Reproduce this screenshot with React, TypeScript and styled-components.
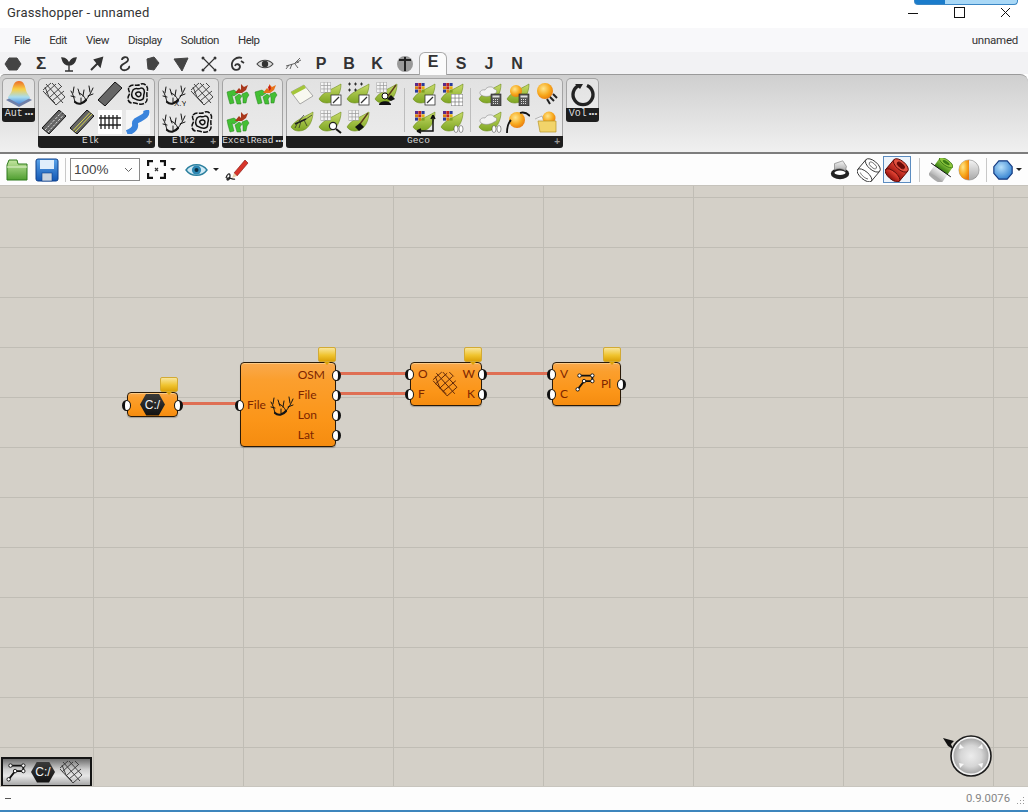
import React from 'react';
import styled, { createGlobalStyle } from 'styled-components';

const GlobalStyle = createGlobalStyle`
  html, body { margin: 0; padding: 0; background: #fff; }
  * { box-sizing: border-box; }
`;

const Window = styled.div`
  position: relative;
  width: 1028px;
  height: 812px;
  overflow: hidden;
  display: flex;
  flex-direction: column;
  font-family: Roboto, "Liberation Sans", sans-serif;
  color: #222;
`;

const TitleBar = styled.div`
  height: 28px;
  flex: none;
  display: flex;
  align-items: center;
  justify-content: space-between;
  padding-left: 7px;
  background: #fff;
`;

const Title = styled.div`
  font-size: 13px;
  letter-spacing: 0.2px;
  color: #333;
  margin-top: -3px;
`;

const Progress = styled.div`
  position: absolute;
  top: 0;
  left: 914px;
  width: 104px;
  height: 5px;
  border-radius: 0 0 4px 4px;
  border: 1px solid #3a86c4;
  border-top: none;
  background: linear-gradient(to right, #1b7ccb 29%, #a9d8f6 29%);
`;

const WinButtons = styled.div`
  display: flex;
  margin-top: -3px;
`;

const WinButton = styled.div`
  width: 46px;
  height: 20px;
  display: flex;
  align-items: center;
  justify-content: center;
  svg { display: block; }
`;

const MenuBar = styled.div`
  height: 24px;
  flex: none;
  display: flex;
  align-items: center;
  gap: 19.2px;
  padding: 0 10px 0 14px;
  background: #f8f8fa;
  font-size: 11.5px;
  letter-spacing: -0.5px;
`;

const MenuItem = styled.span`
  color: #333;
`;

const MenuRight = styled.span`
  margin-left: auto;
  color: #333;
  letter-spacing: -0.25px;
`;

const TabRow = styled.div`
  height: 22px;
  flex: none;
  display: flex;
  padding-left: 0;
  margin-left: -1px;
  background: #f2f2f4;
`;

const Tab = styled.div<{ $active?: boolean }>`
  width: 28px;
  height: ${p => (p.$active ? '23px' : '22px')};
  display: flex;
  align-items: center;
  justify-content: center;
  font: bold 16px "Liberation Sans", sans-serif;
  color: #333;
  position: relative;
  z-index: 1;
  margin-top: ${p => (p.$active ? '0' : '1px')};
  ${p =>
    p.$active &&
    `
    background: #fbfbfb;
    border: 1px solid #aaa;
    border-bottom: none;
    border-radius: 6px 6px 0 0;
    padding-bottom: 5px;
  `}
`;

const SigmaGlyph = styled.span`
  font-size: 17px;
`;

const Ribbon = styled.div`
  height: 80px;
  flex: none;
  display: flex;
  align-items: flex-start;
  gap: 3px;
  padding: 3px 0 0 2px;
  background: linear-gradient(to bottom, #cfcfcf, #dedede 45%, #f0f0f0);
  border-top: 1px solid #9a9a9a;
  border-bottom: 2px solid #7d7d7d;
  border-radius: 5px 8px 0 0;
`;

const Section = styled.div<{ $w: number; $h: number }>`
  position: relative;
  width: ${p => p.$w}px;
  height: ${p => p.$h}px;
  display: flex;
  flex-direction: column;
  border: 1px solid #a4a4a4;
  border-bottom: none;
  border-radius: 5px 5px 3px 3px;
  background: linear-gradient(to bottom, #e2e2e2, #ececec);
`;

const SectionBody = styled.div`
  flex: 1;
  display: flex;
  padding-left: 1px;
`;

const SingleBody = styled.div`
  flex: 1;
  display: flex;
  align-items: center;
  justify-content: center;
`;

const IconGrid = styled.div<{ $cols: number }>`
  display: grid;
  grid-template-columns: repeat(${p => p.$cols}, 28px);
  grid-auto-rows: 28px;
  padding-top: 1px;
`;

const IconCell = styled.div`
  display: flex;
  align-items: center;
  justify-content: center;
  svg { display: block; }
`;

const GroupSep = styled.div`
  width: 1px;
  height: 44px;
  margin: 9px 5px 0 4px;
  background: #bdbdbd;
`;

const SectionFooter = styled.div<{ $h: number; $pad?: number }>`
  position: relative;
  height: ${p => p.$h}px;
  flex: none;
  margin: 0 -1px;
  padding-right: ${p => p.$pad ?? 0}px;
  background: #1e1e1e;
  border-radius: 0 0 3px 3px;
  color: #ddd;
  font: ${p => (p.$h > 13 ? '10px' : '9.5px')} / ${p => p.$h - 2}px "Liberation Mono", monospace;
  text-align: center;
  white-space: nowrap;
`;

const FooterDots = styled.span`
  font-size: 8px;
  letter-spacing: -2px;
  margin-left: 1px;
`;

const FooterPlus = styled.span`
  position: absolute;
  right: 3px;
  top: 0;
  color: #999;
  font: bold 10px/12px "Liberation Sans", sans-serif;
`;

const Toolbar = styled.div`
  height: 31px;
  flex: none;
  display: flex;
  align-items: center;
  padding-left: 5px;
  background: #fdfdfd;
`;

const Tool = styled.div<{ $w: number; $ml?: number; $active?: boolean }>`
  width: ${p => p.$w}px;
  height: 27px;
  flex: none;
  margin-left: ${p => p.$ml ?? 0}px;
  display: flex;
  align-items: center;
  justify-content: center;
  ${p => p.$active && 'border: 1px solid #5b8cc0; background: #eef4fb;'}
  svg { display: block; }
`;

const ToolSep = styled.div<{ $ml: number }>`
  width: 1px;
  height: 24px;
  flex: none;
  margin-left: ${p => p.$ml}px;
  background: #c8c8c8;
`;

const Combo = styled.div`
  width: 70px;
  height: 23px;
  flex: none;
  margin-left: 4px;
  display: flex;
  align-items: center;
  justify-content: space-between;
  padding: 0 6px 0 3px;
  border: 1px solid #8a8a8a;
  background: #fff;
  font: 13.5px "Liberation Sans", sans-serif;
  color: #444;
`;

const Caret = styled.div<{ $ml: number }>`
  width: 0;
  height: 0;
  flex: none;
  margin-left: ${p => p.$ml}px;
  border-left: 3px solid transparent;
  border-right: 3px solid transparent;
  border-top: 3px solid #222;
`;

const RightTools = styled.div`
  margin-left: auto;
  display: flex;
  align-items: center;
  padding-right: 6px;
`;

const Canvas = styled.div`
  position: relative;
  flex: 1;
  background-color: #d4d0c8;
  background-image:
    linear-gradient(to right, #c0bdb5 1px, transparent 1px),
    linear-gradient(to bottom, #c0bdb5 1px, transparent 1px);
  background-size: 150px 100%, 100% 50px;
  background-position: 93px 0, 0 11px;
  border-top: 1px solid #c6c3bc;
`;

const Wire = styled.div<{ $x: number; $y: number; $w: number }>`
  position: absolute;
  left: ${p => p.$x}px;
  top: ${p => p.$y - 187}px;
  width: ${p => p.$w}px;
  height: 3px;
  background: #df6f54;
`;

const Node = styled.div<{ $x: number; $y: number; $w: number; $h: number }>`
  position: absolute;
  left: ${p => p.$x}px;
  top: ${p => p.$y - 186}px;
  width: ${p => p.$w}px;
  height: ${p => p.$h}px;
  display: flex;
  align-items: center;
  justify-content: space-between;
  border: 1px solid #2a1a08;
  border-radius: 4px;
  background: linear-gradient(to bottom, #f9a94e, #fb9f2e 20%, #fb9518 70%, #f58c10);
  box-shadow: inset 0 1px 0 rgba(255, 225, 170, 0.6), 0 1px 1px rgba(0, 0, 0, 0.25);
  color: #7d2500;
  font: 12px Lato, "Liberation Sans", sans-serif;
`;

const PortColumn = styled.div<{ $align: 'left' | 'right' }>`
  display: flex;
  flex-direction: column;
  text-align: ${p => p.$align};
`;

const PortRow = styled.div<{ $side: 'in' | 'out'; $pad: number; $minW?: number }>`
  position: relative;
  height: 20px;
  line-height: 20px;
  min-width: ${p => p.$minW ?? 0}px;
  ${p => (p.$side === 'in' ? `padding-left: ${p.$pad}px;` : `padding-right: ${p.$pad}px;`)}
`;

const Port = styled.span<{ $side: 'in' | 'out' }>`
  position: absolute;
  top: 5px;
  ${p => (p.$side === 'in' ? 'left' : 'right')}: -6px;
  width: 9px;
  height: 11px;
  border-radius: 50%;
  background: #fff;
  border: 1.5px solid #111;
  ${p => (p.$side === 'in' ? 'border-left-width: 3px;' : 'border-right-width: 3px;')}
`;

const NodeIcon = styled.div<{ $mt?: number }>`
  flex: none;
  display: flex;
  margin-top: ${p => p.$mt ?? 0}px;
`;

const Balloon = styled.div`
  position: absolute;
  right: -1px;
  top: -16px;
  width: 18px;
  height: 15px;
  border: 1px solid #d2aa35;
  border-radius: 2px;
  background: linear-gradient(to bottom, #f8e59b, #f0c430 55%, #dca208);
  &::after {
    content: '';
    position: absolute;
    left: 5px;
    bottom: -4px;
    border-left: 3px solid transparent;
    border-right: 3px solid transparent;
    border-top: 3px solid #dca208;
  }
`;

const Hexagon = styled.div<{ $size: number }>`
  flex: none;
  width: ${p => p.$size}px;
  height: ${p => Math.round(p.$size * 0.86)}px;
  display: flex;
  align-items: center;
  justify-content: center;
  clip-path: polygon(25% 0, 75% 0, 100% 50%, 75% 100%, 25% 100%, 0 50%);
  background: linear-gradient(to bottom, #3a3a3a, #111);
  color: #f4f4f4;
  font: 12px "Liberation Sans", sans-serif;
`;

const ParamInner = styled.div`
  flex: 1;
  display: flex;
  justify-content: center;
`;

const RecentPanel = styled.div`
  position: absolute;
  left: 1px;
  bottom: 0;
  width: 91px;
  height: 29px;
  display: flex;
  align-items: center;
  gap: 4px;
  padding-left: 2px;
  border: 2px solid #141414;
  border-bottom-width: 1px;
  background: linear-gradient(to bottom, #6e6e6e, #cfcfcf 40%, #e6e6e6 65%, #a8a8a8);
`;

const Compass = styled.div`
  position: absolute;
  left: 950px;
  top: 549px;
  display: flex;
`;

const CompassArrow = styled.div`
  position: absolute;
  left: 943px;
  top: 552px;
  display: flex;
`;

const StatusBar = styled.div`
  height: 26px;
  flex: none;
  display: flex;
  align-items: center;
  justify-content: space-between;
  padding: 0 3px 0 5px;
  background: #fdfdfd;
  border-bottom: 2px solid #3d86bd;
  border-top: 1px solid #c8c5be;
`;

const Dash = styled.span`
  width: 6px;
  height: 1px;
  background: #555;
`;

const StatusRight = styled.div`
  display: flex;
  align-items: flex-end;
  gap: 6px;
`;

const Version = styled.span`
  font: 11.3px Roboto, "Liberation Sans", sans-serif;
  color: #858585;
`;

const Defs = styled.svg`
  position: absolute;
  width: 0;
  height: 0;
`;

const SharedDefs = () => (
  <Defs>
    <defs>
      <linearGradient id="leaf" x1="0" y1="0" x2="0" y2="1">
        <stop offset="0" stopColor="#c9dc6a" />
        <stop offset="1" stopColor="#7da522" />
      </linearGradient>
      <radialGradient id="sun" cx="0.4" cy="0.35" r="0.7">
        <stop offset="0" stopColor="#ffe58a" />
        <stop offset="0.6" stopColor="#f7a81c" />
        <stop offset="1" stopColor="#e8780c" />
      </radialGradient>
      <linearGradient id="hill" x1="0" y1="0" x2="0" y2="1">
        <stop offset="0" stopColor="#ea6a28" />
        <stop offset="0.35" stopColor="#f8cf45" />
        <stop offset="0.7" stopColor="#a8dcf0" />
        <stop offset="1" stopColor="#4a88d8" />
      </linearGradient>
      <linearGradient id="red" x1="0" y1="0" x2="0" y2="1">
        <stop offset="0" stopColor="#ee4a3a" />
        <stop offset="1" stopColor="#8c0c08" />
      </linearGradient>
      <linearGradient id="green" x1="0" y1="0" x2="0" y2="1">
        <stop offset="0" stopColor="#9ad248" />
        <stop offset="1" stopColor="#367c10" />
      </linearGradient>
      <linearGradient id="metal" x1="0" y1="0" x2="0" y2="1">
        <stop offset="0" stopColor="#f4f4f4" />
        <stop offset="1" stopColor="#a8a8a8" />
      </linearGradient>
      <radialGradient id="blue" cx="0.4" cy="0.35" r="0.7">
        <stop offset="0" stopColor="#b7e0fa" />
        <stop offset="1" stopColor="#2f7fd0" />
      </radialGradient>
      <radialGradient id="dial" cx="0.5" cy="0.5" r="0.5">
        <stop offset="0" stopColor="#ececec" />
        <stop offset="0.6" stopColor="#d6d6d6" />
        <stop offset="1" stopColor="#a9a9a9" />
      </radialGradient>
      <linearGradient id="folder" x1="0" y1="0" x2="0" y2="1">
        <stop offset="0" stopColor="#c4e6a0" />
        <stop offset="1" stopColor="#4f9e30" />
      </linearGradient>
      <linearGradient id="floppy" x1="0" y1="0" x2="0" y2="1">
        <stop offset="0" stopColor="#5aa4ea" />
        <stop offset="1" stopColor="#1257b4" />
      </linearGradient>
    </defs>
  </Defs>
);

const Svg: React.FC<{ size?: number; children: React.ReactNode }> = ({ size = 24, children }) => (
  <svg width={size} height={size} viewBox="0 0 24 24">
    {children}
  </svg>
);

// street map: two crossing families of lines plus a couple of off-axis roads
const MapLines = ({ color = '#333' }: { color?: string }) => (
  <g fill="none" stroke={color} strokeWidth="0.9">
    <path d="M1 8L9 1M3 12L14 2M7 16L19 5M10 19L22 9M14 23L23 15" />
    <path d="M4 2L21 21M10 1L23 15M1 9L14 23M16 1L20 5" />
    <path d="M3 5L7 15L13 21" />
  </g>
);

const AntlerLines = () => (
  <g fill="none" stroke="#151515" strokeLinecap="round">
    <path strokeWidth="2.2" d="M5 20C8 23 13 22 16 18" />
    <path strokeWidth="1" d="M16 18C19 14 21 11 23 6M16 18C14 14 12 12 9 11M5 20C4 16 3 12 1 9M18 14L23 12M20 10L19 4M5 15L1 14M10 13L8 7M13 14L14 8M3 11L4 5M11 20L11 16" />
  </g>
);

const ContourLines = () => (
  <g fill="none" stroke="#111" strokeWidth="1.5">
    <path d="M3 5C7 1 11 5 15 2C20 1 23 6 21 10C20 14 23 18 19 21C14 24 10 20 6 21C2 21 1 16 3 13C5 10 1 8 3 5Z" strokeDasharray="5 1.3" />
    <path d="M7 8C10 5 12 8 15 6C18 6 19 9 18 12C17 15 19 17 15 18C12 19 9 17 7 16C5 14 6 10 7 8Z" />
    <path d="M10 11C12 9 15 10 15 12C15 15 12 15 11 14C10 13 9 12 10 11Z" />
  </g>
);

const RoadBand = ({ mark }: { mark?: 'white' | 'yellow' }) => (
  <>
    <polygon points="0,18 17,0 24,6 7,24" fill="#666" stroke="#111" strokeWidth="1" />
    {mark === 'white' && <path d="M3 20L19.5 2.5M6 22L22 4.5" stroke="#eee" strokeWidth="0.9" strokeDasharray="2.4 1.4" />}
    {mark === 'yellow' && <path d="M3 20.5L20 2.5M5 22L22 4" stroke="#e6e44a" strokeWidth="0.9" />}
  </>
);

const Rail = () => (
  <>
    <rect width="24" height="24" fill="#fff" />
    <path d="M1 8H23M1 15H23" stroke="#222" strokeWidth="1.5" />
    <path d="M3 5V19M7 5V19M11 5V19M15 5V19M19 5V19" stroke="#222" strokeWidth="1.3" />
  </>
);

const River = () => (
  <>
    <rect width="24" height="24" fill="#f6f6f6" />
    <path d="M20 0C23 9 8 8 9 14C10 18 6 21 1 23" fill="none" stroke="#3a84dc" strokeWidth="6" />
  </>
);

const ExcelIcon = ({ flame }: { flame?: boolean }) => (
  <Svg>
    <g fill="#43bf33" stroke="#23801a" strokeWidth="0.5">
      <polygon points="1,10 8,8 12,11 8,14 6,13 8,21 4,22 2,15" />
      <polygon points="9,15 13,12 16,14 14,17 15,22 11,22" />
      <polygon points="16,12 21,10 23,13 21,16 20,21 17,21 17,16" />
    </g>
    <path d="M9 11L13 6L15 8L15 2L18 5L22 3L20 8L16 11Z" fill={flame ? '#e8721a' : '#a9381c'} />
    {flame && <path d="M14 5L16 3L17 7L15 9Z" fill="#c81e12" />}
  </Svg>
);

const Leaf = () => (
  <path d="M1 17C5 10 13 8 23 2C23 10 19 21 9 21C6 21 3 20 1 17Z" fill="url(#leaf)" stroke="#6d8c1c" strokeWidth="0.6" />
);

const GridMark = ({ x, y, s, color }: { x: number; y: number; s: number; color: string }) => (
  <g fill={color}>
    {[0, 1, 2].flatMap(r =>
      [0, 1, 2].map(c => <rect key={`${r}-${c}`} x={x + c * s} y={y + r * s} width={s - 0.7} height={s - 0.7} />)
    )}
  </g>
);

const HeatMark = () => {
  const colors = ['#5a2a8c', '#c02020', '#2a3a9c', '#d88010', '#c02020', '#e8b010', '#2a3a9c', '#d88010', '#7fa020'];
  return (
    <g>
      {colors.map((c, i) => (
        <rect key={i} x={3 + (i % 3) * 3.3} y={1 + Math.floor(i / 3) * 3.3} width="3" height="3" fill={c} />
      ))}
    </g>
  );
};

type LeafTop = 'grid' | 'heat' | 'dots' | 'cloud' | 'sun' | 'gnat';
type LeafBadge = 'pencil' | 'lens' | 'brush' | 'person' | 'grid' | 'axes' | 'feet' | 'calc';

const Badge = ({ kind }: { kind?: LeafBadge }) => {
  switch (kind) {
    case 'pencil':
      return (
        <g>
          <rect x="13" y="13" width="10" height="10" fill="#fff" stroke="#333" strokeWidth="0.8" />
          <path d="M15 21L21 15" stroke="#333" strokeWidth="1.3" />
        </g>
      );
    case 'lens':
      return (
        <g>
          <circle cx="15" cy="16" r="3.6" fill="#fff" stroke="#222" strokeWidth="1.2" />
          <path d="M18 19L23 23" stroke="#111" strokeWidth="2" />
        </g>
      );
    case 'brush':
      return (
        <g>
          <path d="M14 14L22 3" stroke="#5a3a1a" strokeWidth="1.4" />
          <path d="M9 17L14 13L18 17L13 21Z" fill="#111" />
        </g>
      );
    case 'person':
      return (
        <g>
          <circle cx="11" cy="14" r="3" fill="#fff" stroke="#111" />
          <path d="M5 23C5 18 17 18 17 23Z" fill="#111" />
          <path d="M14 14L22 3" stroke="#5a3a1a" strokeWidth="1.4" />
          <path d="M13 17L17 13L21 17L17 19Z" fill="#111" />
        </g>
      );
    case 'grid':
      return (
        <g>
          <rect x="11" y="12" width="12" height="12" fill="#777" />
          <GridMark x={11.5} y={12.5} s={3.9} color="#fff" />
        </g>
      );
    case 'axes':
      return <path d="M5 21H21V5M21 5L19 9M21 5L23 9M5 21L9 19M5 21L9 23" fill="none" stroke="#111" strokeWidth="1.5" />;
    case 'feet':
      return (
        <g fill="#fff" stroke="#333" strokeWidth="0.5">
          <ellipse cx="16" cy="19" rx="2" ry="3.5" />
          <ellipse cx="21" cy="19" rx="2" ry="3.5" />
        </g>
      );
    case 'calc':
      return (
        <g>
          <rect x="13" y="12" width="10" height="12" fill="#555" stroke="#222" strokeWidth="0.6" />
          <rect x="14.5" y="13.5" width="7" height="2" fill="#ddd" />
          <path d="M15 17.5H21M15 19.5H21M15 21.5H21" stroke="#ddd" strokeWidth="1" strokeDasharray="1 1" />
        </g>
      );
    default:
      return null;
  }
};

const LeafIcon = ({ top, badge }: { top?: LeafTop; badge?: LeafBadge }) => (
  <Svg>
    <Leaf />
    {top === 'grid' && (
      <g>
        <rect x="2.6" y="0.2" width="10.4" height="10.4" fill="#9a9a9a" />
        <GridMark x={3} y={0.5} s={3.4} color="#f4f4f4" />
      </g>
    )}
    {top === 'heat' && <HeatMark />}
    {top === 'dots' && (
      <path d="M2 2H5M3.5 .5V3.5M8 2H11M9.5 .5V3.5M14 2H17M15.5 .5V3.5M2 8H5M3.5 6.5V9.5M8 8H11M9.5 6.5V9.5" stroke="#222" strokeWidth="0.9" />
    )}
    {top === 'cloud' && (
      <path d="M3 13C0 10 4 7 7 8C9 4 15 4 16 7C19 7 20 11 16 12C12 15 6 15 3 13Z" fill="#f2f2f2" stroke="#8a8a8a" strokeWidth="0.6" />
    )}
    {top === 'sun' && <circle cx="10" cy="9" r="6" fill="url(#sun)" />}
    {top === 'gnat' && (
      <g stroke="#222" fill="none">
        <path d="M5 14L16 9" strokeWidth="1.8" />
        <path d="M8 12L5 18M11 11L9 18M14 10L17 16M16 9L22 5M9 11L14 5" strokeWidth="0.7" />
      </g>
    )}
    <Badge kind={badge} />
  </Svg>
);

const NoteIcon = () => (
  <Svg>
    <polygon points="1,10 14,3 23,14 10,22" fill="#f8f8f0" stroke="#888" strokeWidth="0.7" />
    <polygon points="1,10 14,3 16,6 3,13" fill="#a4c639" />
  </Svg>
);

const SunIcon = ({ variant }: { variant: 'rays' | 'arc' }) => (
  <Svg>
    <circle cx="11" cy={variant === 'rays' ? 9 : 10} r="8" fill="url(#sun)" />
    {variant === 'rays' ? (
      <path d="M16 15L20 19M19 12L23 16M13 17L16 22" stroke="#222" strokeWidth="2" />
    ) : (
      <path d="M5 10C2 13 1 18 1 23M14 3C17 2 21 3 24 6" fill="none" stroke="#111" strokeWidth="1.8" />
    )}
  </Svg>
);

const SunFolderIcon = () => (
  <Svg>
    <circle cx="15" cy="8" r="6.5" fill="url(#sun)" />
    <path d="M1 9L8 6L9 9" fill="#f4f4f4" stroke="#999" strokeWidth="0.7" />
    <polygon points="4,11 22,11 22,22 6,22" fill="#f2d46a" stroke="#b8962a" strokeWidth="0.7" />
  </Svg>
);

const TabIcon: React.FC<{ d?: string; fill?: string; stroke?: string; w?: number; children?: React.ReactNode }> = ({
  d,
  fill = 'none',
  stroke = '#333',
  w = 2,
  children,
}) => (
  <svg width="18" height="18" viewBox="0 0 18 18">
    {d && <path d={d} fill={fill} stroke={stroke} strokeWidth={w} />}
    {children}
  </svg>
);

const tabs: React.ReactNode[] = [
  <TabIcon key="a" d="M5 3H13L17 9L13 15H5L1 9Z" fill="#444" stroke="#444" w={1} />,
  <SigmaGlyph key="b">Σ</SigmaGlyph>,
  <TabIcon key="c" d="M9 10V16M5 16H13M9 10C5 10 3 7 2 3C6 3 8 5 9 10C10 5 12 3 16 3C15 7 13 10 9 10Z" fill="#333" w={1.4} />,
  <TabIcon key="d" d="M3 15L10 8M7 5L14 3L12 11Z" fill="#333" w={2} />,
  <TabIcon key="e" d="M6 5C6 2 11 1 12 4C13 7 8 8 6 10C3 13 6 16 10 15C12 14 14 13 13 11" w={1.8} />,
  <TabIcon key="f" d="M3 4L10 2L15 8L10 15L4 14Z" fill="#444" stroke="#444" w={1} />,
  <TabIcon key="g" d="M2 4L16 3L10 16Z" fill="#444" stroke="#444" w={1} />,
  <TabIcon key="h" w={1.5}>
    <path d="M4 14L14 4M4 4L14 14" stroke="#333" strokeWidth="1.1" />
    <circle cx="3" cy="15" r="1.5" fill="#333" />
    <circle cx="15" cy="3" r="1.5" fill="#333" />
    <circle cx="3" cy="3" r="1.5" fill="#333" />
    <circle cx="15" cy="15" r="1.5" fill="#333" />
  </TabIcon>,
  <TabIcon key="i" d="M14 3C8 1 3 6 4 11C5 16 11 16 12 12C12 9 8 8 7 11M13 6L16 8" w={1.8} />,
  <TabIcon key="j" w={1}>
    <path d="M1 9C5 4 13 4 17 9C13 14 5 14 1 9Z" fill="#ddd" stroke="#444" strokeWidth="1.2" />
    <circle cx="9" cy="9" r="3.2" fill="#333" />
  </TabIcon>,
  <TabIcon key="k" w={1}>
    <path d="M2 11L9 9L15 7M5 10L2 14M8 9L6 14M11 9L14 13M11 8L16 3M13 7L17 5" stroke="#555" strokeWidth="0.9" fill="none" />
  </TabIcon>,
  'P',
  'B',
  'K',
  <TabIcon key="t" w={1}>
    <circle cx="9" cy="9" r="8" fill="#999" />
    <path d="M3 5H15M9 2V16" stroke="#222" strokeWidth="2" />
  </TabIcon>,
  'E',
  'S',
  'J',
  'N',
];

const PolylineIcon = () => (
  <Svg size={22}>
    <path d="M4 20L11 11H20V5H6" fill="none" stroke="#111" strokeWidth="2" />
    {[[4, 20], [11, 11], [20, 11], [20, 5], [6, 5]].map(([x, y]) => (
      <circle key={`${x}-${y}`} cx={x} cy={y} r="1.9" fill="#fff" stroke="#111" strokeWidth="1" />
    ))}
  </Svg>
);

const CylinderPreview = ({ fill, wire }: { fill: string; wire?: boolean }) => {
  const edge = wire ? '#333' : '#5a0a08';
  return (
    <Svg>
      <g transform="rotate(40 12 12)">
        <rect x="3" y="6" width="18" height="13" fill={fill} stroke={edge} strokeWidth="0.9" />
        <ellipse cx="12" cy="19" rx="9" ry="4" fill={fill} stroke={edge} strokeWidth="0.9" />
        <ellipse cx="12" cy="6" rx="9" ry="4.4" fill={wire ? '#fff' : '#e2503f'} stroke={edge} strokeWidth="0.9" />
        <ellipse cx="12" cy="6" rx="4.5" ry="2.1" fill={wire ? '#fff' : '#6b0806'} stroke={wire ? '#555' : edge} strokeWidth="0.8" />
        {wire && <path d="M7 19.5C9 21 15 21 17 19.5" fill="none" stroke="#555" strokeWidth="0.8" />}
      </g>
    </Svg>
  );
};

const Dots = () => <FooterDots>•••</FooterDots>;

const App: React.FC = () => (
  <Window>
    <GlobalStyle />
    <SharedDefs />
    <TitleBar>
      <Title>Grasshopper - unnamed</Title>
      <WinButtons>
        <WinButton>
          <svg width="10" height="10" viewBox="0 0 10 10">
            <path d="M0 5.5H10" stroke="#111" />
          </svg>
        </WinButton>
        <WinButton>
          <svg width="11" height="11" viewBox="0 0 11 11">
            <rect x="0.5" y="0.5" width="10" height="10" fill="none" stroke="#111" />
          </svg>
        </WinButton>
        <WinButton>
          <svg width="11" height="11" viewBox="0 0 11 11">
            <path d="M1 1L10 10M10 1L1 10" stroke="#111" />
          </svg>
        </WinButton>
      </WinButtons>
    </TitleBar>
    <Progress />
    <MenuBar>
      {['File', 'Edit', 'View', 'Display', 'Solution', 'Help'].map(item => (
        <MenuItem key={item}>{item}</MenuItem>
      ))}
      <MenuRight>unnamed</MenuRight>
    </MenuBar>
    <TabRow>
      {tabs.map((t, i) => (
        <Tab key={i} $active={t === 'E'}>
          {t}
        </Tab>
      ))}
    </TabRow>
    <Ribbon>
      <Section $w={33} $h={44}>
        <SingleBody>
          <svg width="28" height="28" viewBox="0 0 28 28">
            <path d="M1 20L14 27L27 20L14 13Z" fill="#6f7fa8" />
            <path d="M14 1C19 1 20 6 21 10C22 14 25 16 25 18L14 24L3 18C3 16 6 14 7 10C8 6 9 1 14 1Z" fill="url(#hill)" />
          </svg>
        </SingleBody>
        <SectionFooter $h={14}>Aut<Dots /></SectionFooter>
      </Section>
      <Section $w={117} $h={70}>
        <SectionBody>
          <IconGrid $cols={4}>
            <IconCell><Svg><MapLines /></Svg></IconCell>
            <IconCell><Svg><AntlerLines /></Svg></IconCell>
            <IconCell><Svg><RoadBand /></Svg></IconCell>
            <IconCell><Svg><ContourLines /></Svg></IconCell>
            <IconCell><Svg><RoadBand mark="white" /></Svg></IconCell>
            <IconCell><Svg><RoadBand mark="yellow" /></Svg></IconCell>
            <IconCell><Svg><Rail /></Svg></IconCell>
            <IconCell><Svg><River /></Svg></IconCell>
          </IconGrid>
        </SectionBody>
        <SectionFooter $h={12} $pad={12}>
          Elk
          <FooterPlus>+</FooterPlus>
        </SectionFooter>
      </Section>
      <Section $w={61} $h={70}>
        <SectionBody>
          <IconGrid $cols={2}>
            <IconCell>
              <Svg>
                <AntlerLines />
                <text x="12" y="23.5" fontSize="8" fontFamily="Liberation Sans" fill="#111">X,Y</text>
              </Svg>
            </IconCell>
            <IconCell><Svg><MapLines /></Svg></IconCell>
            <IconCell><Svg><AntlerLines /></Svg></IconCell>
            <IconCell><Svg><ContourLines /></Svg></IconCell>
          </IconGrid>
        </SectionBody>
        <SectionFooter $h={12} $pad={10}>
          Elk2
          <FooterPlus>+</FooterPlus>
        </SectionFooter>
      </Section>
      <Section $w={61} $h={70}>
        <SectionBody>
          <IconGrid $cols={2}>
            <IconCell><ExcelIcon /></IconCell>
            <IconCell><ExcelIcon flame /></IconCell>
            <IconCell><ExcelIcon /></IconCell>
          </IconGrid>
        </SectionBody>
        <SectionFooter $h={12}>ExcelRead<Dots /></SectionFooter>
      </Section>
      <Section $w={277} $h={70}>
        <SectionBody>
          <IconGrid $cols={4}>
            <IconCell><NoteIcon /></IconCell>
            <IconCell><LeafIcon top="grid" badge="pencil" /></IconCell>
            <IconCell><LeafIcon top="dots" badge="pencil" /></IconCell>
            <IconCell><LeafIcon top="grid" badge="person" /></IconCell>
            <IconCell><LeafIcon top="gnat" /></IconCell>
            <IconCell><LeafIcon top="grid" badge="lens" /></IconCell>
            <IconCell><LeafIcon top="grid" badge="brush" /></IconCell>
          </IconGrid>
          <GroupSep />
          <IconGrid $cols={2}>
            <IconCell><LeafIcon top="heat" badge="pencil" /></IconCell>
            <IconCell><LeafIcon top="heat" badge="grid" /></IconCell>
            <IconCell><LeafIcon top="heat" badge="axes" /></IconCell>
            <IconCell><LeafIcon top="heat" badge="feet" /></IconCell>
          </IconGrid>
          <GroupSep />
          <IconGrid $cols={3}>
            <IconCell><LeafIcon top="cloud" badge="calc" /></IconCell>
            <IconCell><LeafIcon top="sun" badge="calc" /></IconCell>
            <IconCell><SunIcon variant="rays" /></IconCell>
            <IconCell><LeafIcon top="cloud" badge="feet" /></IconCell>
            <IconCell><SunIcon variant="arc" /></IconCell>
            <IconCell><SunFolderIcon /></IconCell>
          </IconGrid>
        </SectionBody>
        <SectionFooter $h={12} $pad={12}>
          Geco
          <FooterPlus>+</FooterPlus>
        </SectionFooter>
      </Section>
      <Section $w={33} $h={44}>
        <SingleBody>
          <svg width="26" height="26" viewBox="0 0 26 26">
            <path d="M9 4.5A10 10 0 1 0 17 4.5" fill="none" stroke="#222" strokeWidth="3.4" />
            <path d="M5 3L13 3L10 8Z" fill="#222" />
          </svg>
        </SingleBody>
        <SectionFooter $h={14}>Vol<Dots /></SectionFooter>
      </Section>
    </Ribbon>
    <Toolbar>
      <Tool $w={24}>
        <Svg>
          <path d="M2 22V7L4 2H12L13 6H22V22Z" fill="url(#folder)" stroke="#2f7a1c" />
          <path d="M2 9H22" stroke="#e4f4d0" />
        </Svg>
      </Tool>
      <Tool $w={24} $ml={6}>
        <Svg>
          <rect x="1" y="1" width="22" height="22" rx="2" fill="url(#floppy)" stroke="#0d3f8a" />
          <rect x="5" y="2" width="14" height="9" fill="#dfeefc" />
          <rect x="7" y="15" width="10" height="8" fill="#c9d3de" stroke="#0d3f8a" strokeWidth="0.6" />
        </Svg>
      </Tool>
      <ToolSep $ml={6} />
      <Combo>
        100%
        <svg width="9" height="6" viewBox="0 0 9 6">
          <path d="M1 1L4.5 4.5L8 1" fill="none" stroke="#666" />
        </svg>
      </Combo>
      <Tool $w={20} $ml={6}>
        <svg width="19" height="19" viewBox="0 0 19 19">
          <path d="M1 6V1H6M13 1H18V6M18 13V18H13M6 18H1V13" fill="none" stroke="#111" strokeWidth="2.4" />
          <path d="M8 8L11 11M11 8L8 11" stroke="#333" strokeWidth="1.2" />
        </svg>
      </Tool>
      <Caret $ml={4} />
      <Tool $w={24} $ml={8}>
        <svg width="23" height="16" viewBox="0 0 23 16">
          <path d="M1 8C6 1 17 1 22 8C17 15 6 15 1 8Z" fill="#cfe9f4" stroke="#2b7f9e" strokeWidth="1.4" />
          <circle cx="11.5" cy="8" r="4.6" fill="#2d88b4" />
          <circle cx="11.5" cy="8" r="2" fill="#0c2f44" />
        </svg>
      </Tool>
      <Caret $ml={5} />
      <Tool $w={24} $ml={6}>
        <Svg>
          <path d="M9 15L20 2L23 5L12 18Z" fill="#d8352a" stroke="#7d120d" strokeWidth="0.6" />
          <path d="M9 15L12 18L7 20Z" fill="#e8d3ad" />
          <path d="M1 20C2 16 5 14 5 18C5 22 2 23 2 21C3 18 8 22 10 21" fill="none" stroke="#222" strokeWidth="1.3" />
        </Svg>
      </Tool>
      <RightTools>
        <Tool $w={22}>
          <Svg size={22}>
            <ellipse cx="12" cy="16" rx="10" ry="6" fill="#222" />
            <ellipse cx="12" cy="15" rx="6" ry="2.5" fill="#fff" />
            <path d="M6 5L15 2L19 8L18 13C14 10 10 10 6 12Z" fill="url(#metal)" stroke="#777" strokeWidth="0.7" />
          </Svg>
        </Tool>
        <Tool $w={24} $ml={6}><CylinderPreview fill="#fff" wire /></Tool>
        <Tool $w={28} $ml={2} $active><CylinderPreview fill="url(#red)" /></Tool>
        <ToolSep $ml={8} />
        <Tool $w={24} $ml={9}>
          <Svg>
            <g transform="rotate(35 12 12)">
              <rect x="4" y="12" width="16" height="10" fill="url(#metal)" />
              <ellipse cx="12" cy="22" rx="8" ry="2" fill="#aaa" />
              <rect x="4" y="3" width="16" height="9" fill="url(#green)" />
              <ellipse cx="12" cy="3" rx="8" ry="3" fill="#8cc63c" stroke="#2d6a10" strokeWidth="0.7" />
              <ellipse cx="12" cy="3" rx="4" ry="1.5" fill="#3c7d16" />
              <path d="M0 12H24" stroke="#111" strokeWidth="0.9" />
            </g>
          </Svg>
        </Tool>
        <Tool $w={22} $ml={5}>
          <Svg size={22}>
            <circle cx="12" cy="12" r="11" fill="url(#metal)" stroke="#777" strokeWidth="0.6" />
            <path d="M12 1A11 11 0 0 0 12 23Z" fill="url(#sun)" />
          </Svg>
        </Tool>
        <ToolSep $ml={6} />
        <Tool $w={20} $ml={6}>
          <Svg size={20}>
            <polygon points="7,1 17,1 23,8 23,16 17,23 7,23 1,16 1,8" fill="url(#blue)" stroke="#153a80" strokeWidth="1.4" />
          </Svg>
        </Tool>
        <Caret $ml={3} />
      </RightTools>
    </Toolbar>
    <Canvas>
      <Wire $x={180} $y={403} $w={58} />
      <Wire $x={338} $y={373} $w={70} />
      <Wire $x={338} $y={393} $w={70} />
      <Wire $x={485} $y={373} $w={66} />

      <Node $x={127} $y={392} $w={51} $h={25}>
        <PortRow $side="in" $pad={0}>
          <Port $side="in" />
        </PortRow>
        <ParamInner>
          <Hexagon $size={25}>C:/</Hexagon>
        </ParamInner>
        <PortRow $side="out" $pad={0}>
          <Port $side="out" />
        </PortRow>
        <Balloon />
      </Node>

      <Node $x={240} $y={362} $w={96} $h={85}>
        <PortColumn $align="left">
          <PortRow $side="in" $pad={6}>
            File
            <Port $side="in" />
          </PortRow>
        </PortColumn>
        <NodeIcon>
          <Svg size={24}><AntlerLines /></Svg>
        </NodeIcon>
        <PortColumn $align="left">
          {['OSM', 'File', 'Lon', 'Lat'].map(label => (
            <PortRow key={label} $side="out" $pad={10} $minW={37}>
              {label}
              <Port $side="out" />
            </PortRow>
          ))}
        </PortColumn>
        <Balloon />
      </Node>

      <Node $x={410} $y={362} $w={72} $h={44}>
        <PortColumn $align="left">
          {['O', 'F'].map(label => (
            <PortRow key={label} $side="in" $pad={7}>
              {label}
              <Port $side="in" />
            </PortRow>
          ))}
        </PortColumn>
        <NodeIcon>
          <Svg size={26}><MapLines color="#5a2408" /></Svg>
        </NodeIcon>
        <PortColumn $align="right">
          {['W', 'K'].map(label => (
            <PortRow key={label} $side="out" $pad={6}>
              {label}
              <Port $side="out" />
            </PortRow>
          ))}
        </PortColumn>
        <Balloon />
      </Node>

      <Node $x={552} $y={362} $w={69} $h={44}>
        <PortColumn $align="left">
          {['V', 'C'].map(label => (
            <PortRow key={label} $side="in" $pad={7}>
              {label}
              <Port $side="in" />
            </PortRow>
          ))}
        </PortColumn>
        <NodeIcon $mt={-4}>
          <PolylineIcon />
        </NodeIcon>
        <PortColumn $align="right">
          <PortRow $side="out" $pad={9}>
            Pl
            <Port $side="out" />
          </PortRow>
        </PortColumn>
        <Balloon />
      </Node>

      <RecentPanel>
        <PolylineIcon />
        <Hexagon $size={24}>C:/</Hexagon>
        <Svg><MapLines /></Svg>
      </RecentPanel>

      <CompassArrow>
        <svg width="14" height="12" viewBox="0 0 14 12">
          <polygon points="0,0 11,3 8,6 10,11 5,8" fill="#111" />
        </svg>
      </CompassArrow>
      <Compass>
        <svg width="42" height="42" viewBox="0 0 42 42">
          <circle cx="21" cy="21" r="20" fill="#f2f2f2" stroke="#1c1c1c" strokeWidth="1.6" />
          <circle cx="21" cy="21" r="17.5" fill="url(#dial)" />
          <path d="M10 9L14 13L9 14ZM32 9L28 13L33 14ZM10 33L14 29L9 28ZM32 33L28 29L33 28Z" fill="#f8f8f8" />
        </svg>
      </Compass>
    </Canvas>
    <StatusBar>
      <Dash />
      <StatusRight>
        <Version>0.9.0076</Version>
        <svg width="9" height="9" viewBox="0 0 9 9">
          <path d="M7 1h1v1H7zM4 4h1v1H4zM7 4h1v1H7zM1 7h1v1H1zM4 7h1v1H4zM7 7h1v1H7z" fill="#999" />
        </svg>
      </StatusRight>
    </StatusBar>
  </Window>
);

export default App;
